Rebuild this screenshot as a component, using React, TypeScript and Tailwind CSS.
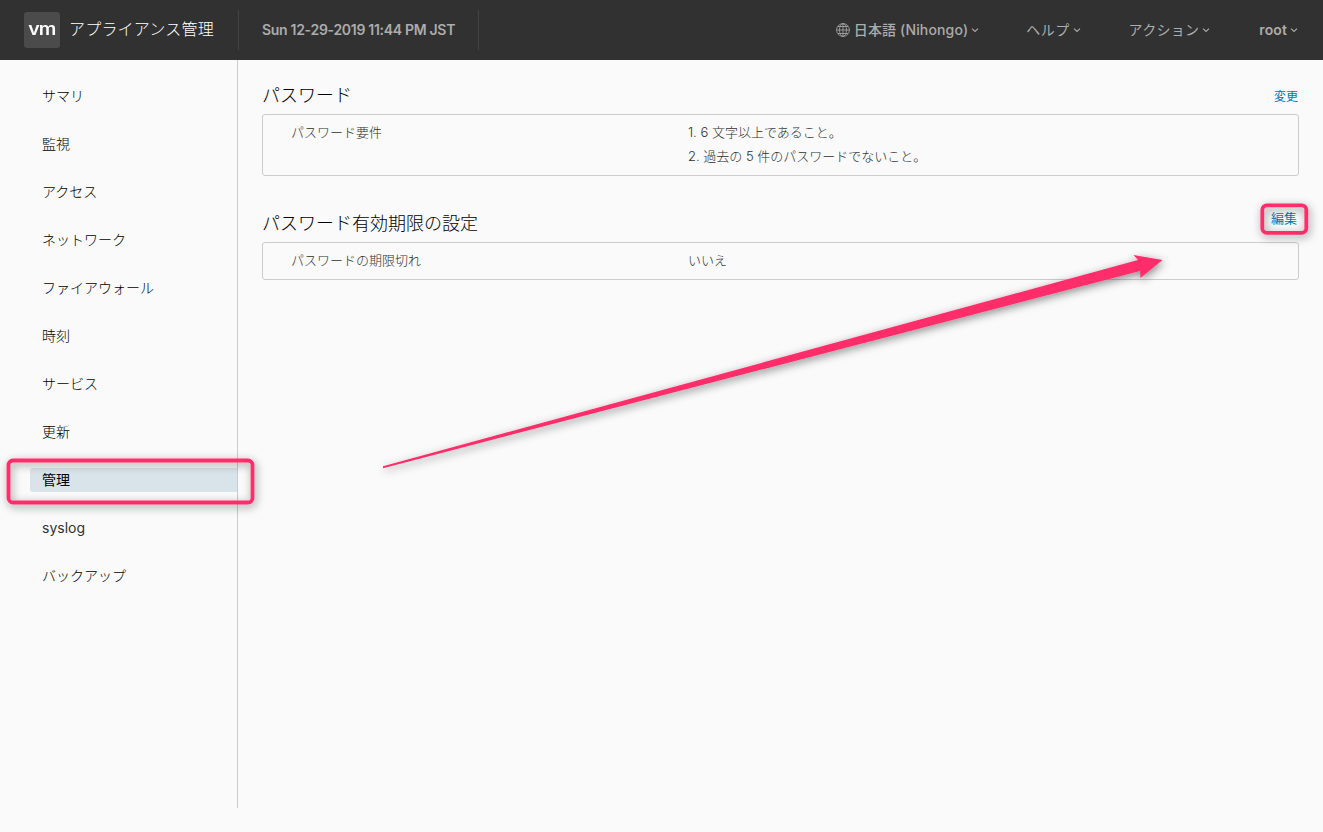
import React from 'react';

const navItems = ['サマリ', '監視', 'アクセス', 'ネットワーク', 'ファイアウォール', '時刻', 'サービス', '更新', '管理', 'syslog', 'バックアップ'];

function Caret() {
  return (
    <svg className="ml-[3px] h-2 w-2" viewBox="0 0 8 8" fill="none" stroke="currentColor" strokeWidth="1.1">
      <path d="M1 2.6 4 5.4 7 2.6" />
    </svg>
  );
}

function Globe() {
  return (
    <svg className="mr-1 h-[14px] w-[14px]" viewBox="0 0 14 14" fill="none" stroke="currentColor" strokeWidth="0.8">
      <circle cx="7" cy="7" r="6.4" />
      <ellipse cx="7" cy="7" rx="3.5" ry="6.4" />
      <path d="M7 .6v12.8M.6 7h12.8M2 3.5h10M2 10.5h10" />
    </svg>
  );
}

function Menu({ label, className, icon }: { label: string; className: string; icon?: React.ReactNode }) {
  return (
    <button className={`flex items-center whitespace-nowrap ${className}`}>
      {icon}
      <span>{label}</span>
      <Caret />
    </button>
  );
}

function Header() {
  return (
    <header className="flex h-[60px] shrink-0 items-center bg-[#313131] text-sm font-medium text-[#acacac]">
      <div className="ml-6 flex h-9 w-9 items-center justify-center rounded-[3px] bg-[#4b4b4b] font-['Inter'] text-[17px] leading-none font-semibold tracking-[-0.8px] text-white">
        <span className="-mt-0.5 inline-block scale-x-115">vm</span>
      </div>
      <div className="ml-[9px] w-[160px] text-[16px] leading-6 tracking-[0.2px] whitespace-nowrap text-white">
        <span className="relative -top-px font-light">アプライアンス管理</span>
      </div>
      <div className="ml-[9px] flex h-10 w-[241px] items-center border-x border-[#434343] pl-[23px] font-semibold tracking-[-0.3px] whitespace-nowrap">
        Sun 12-29-2019 11:44 PM JST
      </div>
      <nav className="ml-auto flex items-center pr-[25px]">
        <Menu label="日本語 (Nihongo)" className="mr-[47px] tracking-[0.15px]" icon={<Globe />} />
        <Menu label="ヘルプ" className="mr-[48px] font-normal tracking-[0.4px]" />
        <Menu label="アクション" className="mr-[49px] font-normal tracking-[0.3px]" />
        <Menu label="root" className="font-semibold tracking-[0.1px]" />
      </nav>
    </header>
  );
}

function Sidebar() {
  return (
    <aside className="flex h-[748px] w-[238px] shrink-0 flex-col gap-6 border-r border-[#cccccc] pt-6 pl-[30px]">
      {navItems.map((item) => (
        <a
          key={item}
          className={`h-6 rounded-l-[3px] pl-3 text-sm leading-6 ${item === '管理' ? 'bg-[#d9e4ea] font-normal text-black' : item === 'syslog' ? 'font-normal text-[#313131]' : 'font-light text-black'}`}
        >
          {item}
        </a>
      ))}
    </aside>
  );
}

function Section({ title, action, label, values, className }: { title: string; action: React.ReactNode; label: string; values: string[]; className: string }) {
  return (
    <section className={className}>
      <div className="flex h-[30px] items-start justify-between">
        <h2 className="text-[18px] leading-6 font-light text-black">{title}</h2>
        {action}
      </div>
      <div className="flex rounded-[3px] border border-[#cccccc] pt-[5px] pb-[7px] pl-7 text-[13px] leading-6 text-[#2e2e2e]">
        <div className="w-[397px] font-light">{label}</div>
        <div className="font-light">
          {values.map((v) => (
            <div key={v}>{v}</div>
          ))}
        </div>
      </div>
    </section>
  );
}

export default function App() {
  return (
    <div className="relative flex h-[832px] w-[1323px] flex-col overflow-hidden bg-[#fafafa] font-['Inter','Noto_Sans_CJK_JP',sans-serif]">
      <Header />
      <div className="flex flex-1">
        <Sidebar />
        <main className="flex-1 pt-6 pr-6 pl-6">
          <Section
            className=""
            title="パスワード"
            action={<a className="mt-px mr-px text-[12px] leading-6 text-[#0079b8]">変更</a>}
            label="パスワード要件"
            values={['1. 6 文字以上であること。', '2. 過去の 5 件のパスワードでないこと。']}
          />
          <Section
            className="mt-9"
            title="パスワード有効期限の設定"
            action={<a className="-mt-[6px] mr-0.5 text-[13px] leading-6 text-[#0079b8]">編集</a>}
            label="パスワードの期限切れ"
            values={['いいえ']}
          />
        </main>
      </div>
      <svg className="pointer-events-none absolute inset-0 h-full w-full" viewBox="0 0 1323 832">
        <defs>
          <filter id="shade" filterUnits="userSpaceOnUse" x="0" y="180" width="1323" height="350">
            <feDropShadow dx="1.5" dy="2.5" stdDeviation="4" floodColor="#000" floodOpacity="0.45" />
          </filter>
        </defs>
        <g filter="url(#shade)">
          <rect x="8.5" y="460.5" width="244" height="42" rx="4.5" fill="none" stroke="#ff2d6b" strokeWidth="3.8" />
          <rect x="1262.3" y="205.3" width="44" height="27.5" rx="4.5" fill="none" stroke="#ff2d6b" strokeWidth="3.8" />
          <path d="M383 466.3 1138 260 1133.5 255 1162.5 260 1140.5 278 1140 271 383 468.2Z" fill="#ff2d6b" />
        </g>
      </svg>
    </div>
  );
}
